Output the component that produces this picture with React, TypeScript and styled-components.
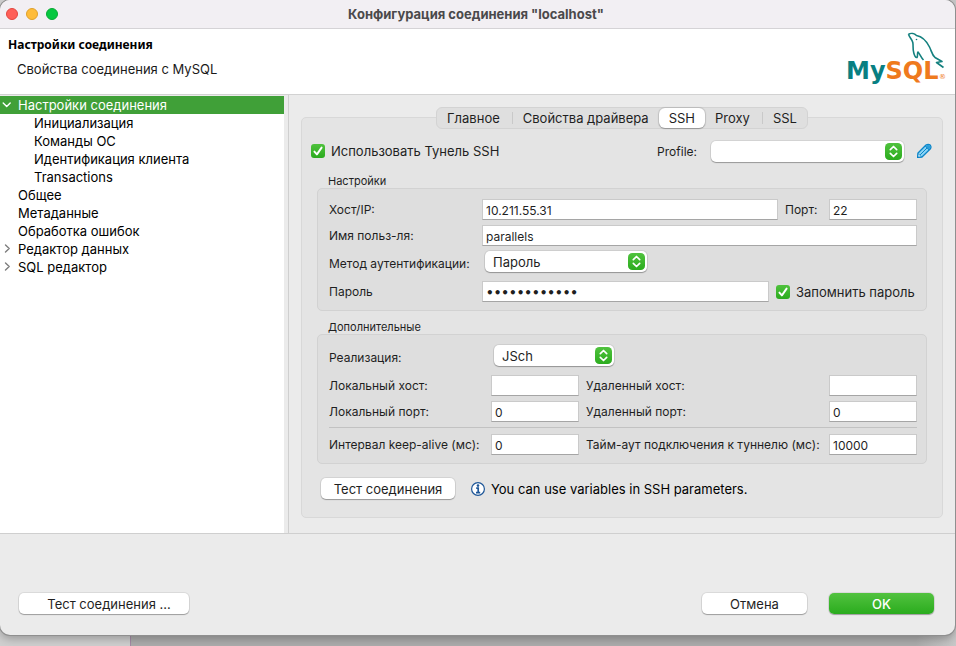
import React from "react";
import styled, { createGlobalStyle, css } from "styled-components";

const GlobalStyle = createGlobalStyle`
  *, *::before, *::after { box-sizing: border-box; }
  body {
    margin: 0;
    font-family: Inter, "Liberation Sans", sans-serif;
    font-size: 13px;
    line-height: 16px;
    color: #1f1f1f;
  }
  button, input, select { font: inherit; color: inherit; }
`;

const Desktop = styled.div`
  min-height: 100vh;
  display: flex;
  padding: 0 1px 11px 0;
  background: linear-gradient(to right, #cfcfcf 0 130px, #a58ba6 130px 131px, #acacac 131px calc(100% - 40px), #c8c8c8);
`;

const Window = styled.main`
  flex: 1;
  min-width: 0;
  display: flex;
  flex-direction: column;
  background: #ebebeb;
  border-radius: 10px;
  overflow: hidden;
  box-shadow: 0 0 0 1px #8f8f8f, 0 4px 8px rgba(0, 0, 0, 0.25);
`;

const TitleBar = styled.header`
  height: 29px;
  display: grid;
  grid-template-columns: 80px 1fr 80px;
  align-items: center;
  padding: 0 9px 0 6px;
  background: #f2eff3;
  border-bottom: 1px solid #d5d3d6;
`;

const Lights = styled.div`
  display: flex;
  gap: 8px;
`;

const Light = styled.button<{ $fill: string; $edge: string }>`
  width: 12px;
  height: 12px;
  padding: 0;
  border-radius: 50%;
  border: 1px solid ${(p) => p.$edge};
  background: ${(p) => p.$fill};
`;

const WindowTitle = styled.h1`
  margin: 0;
  font-size: 13px;
  font-weight: 700;
  line-height: 16px;
  text-align: center;
  color: #4a494b;
`;

const Banner = styled.section`
  height: 66px;
  display: flex;
  justify-content: space-between;
  padding: 3px 9px 0 8px;
  background: #fff;
  border-bottom: 1px solid #d2d2d2;
`;

const BannerTitle = styled.h2`
  margin: 5px 0 8px;
  font-family: "Noto Sans", sans-serif;
  font-size: 12px;
  line-height: 16px;
  font-weight: 700;
  color: #000;
`;

const BannerText = styled.p`
  margin: 0;
  padding-left: 9px;
  color: #1a1a1a;
`;

const Body = styled.div`
  flex: 1;
  display: flex;
  border-bottom: 1px solid #cfcfcf;
`;

const Tree = styled.ul`
  width: 284px;
  flex: none;
  margin: 1px 0 0;
  padding: 0;
  list-style: none;
  background: #fff;
  color: #000;
`;

const TreeItem = styled.li<{ $level: number; $selected?: boolean }>`
  height: 18px;
  display: flex;
  align-items: center;
  padding-left: ${(p) => (p.$level === 2 ? 34 : 2)}px;
  ${(p) =>
    p.$selected &&
    css`
      background: #40a038;
      color: #fff;
    `}
`;

const Arrow = styled.span`
  width: 16px;
  flex: none;
  display: flex;
`;

const Content = styled.section`
  flex: 1;
  min-width: 0;
  margin-left: 4px;
  padding: 12px 12px 15px;
  border-left: 1px solid #cfcfcf;
  display: flex;
  flex-direction: column;
`;

const TabBar = styled.div`
  align-self: center;
  z-index: 1;
  height: 22px;
  margin-bottom: -12px;
  display: flex;
  background: #dfdfdf;
  border: 1px solid #d3d3d3;
  border-radius: 6px;
`;

const Tab = styled.button<{ $active?: boolean; $divided?: boolean }>`
  height: 20px;
  padding: 0 10px;
  border: 0;
  border-radius: 6px;
  background: none;
  display: flex;
  align-items: center;
  ${(p) =>
    p.$active &&
    css`
      background: #fff;
      box-shadow: 0 0 1px 1px rgba(0, 0, 0, 0.12), 0 1px 1px rgba(0, 0, 0, 0.2);
    `}
  ${(p) =>
    p.$divided &&
    css`
      &::after {
        content: "";
        width: 1px;
        height: 12px;
        margin: 0 -10px 0 12px;
        background: #c9c9c9;
      }
    `}
`;

const Panel = styled.div`
  flex: 1;
  display: flex;
  flex-direction: column;
  padding: 22px 0 18px;
  background: #e4e4e4;
  border: 1px solid #d8d8d8;
  border-radius: 5px;
`;

const ToggleRow = styled.div`
  height: 22px;
  display: flex;
  align-items: center;
  justify-content: space-between;
  padding: 0 10px 0 9px;
  margin-bottom: 12px;
`;

const Profile = styled.div`
  display: flex;
  align-items: center;
  gap: 14px;
`;

const CheckLabel = styled.label<{ $width?: number }>`
  display: flex;
  align-items: center;
  gap: 6px;
  white-space: nowrap;
  ${(p) => p.$width && `width: ${p.$width}px;`}
`;

const CheckHolder = styled.span`
  position: relative;
  width: 14px;
  height: 14px;
  flex: none;
  svg {
    position: absolute;
    inset: 0;
    pointer-events: none;
  }
`;

const CheckInput = styled.input`
  appearance: none;
  display: block;
  width: 14px;
  height: 14px;
  margin: 0;
  border-radius: 3px;
  background: #fff;
  &:checked { background: linear-gradient(#4fc23d, #2bab1e); }
`;

const SelectHolder = styled.span<{ $width: number; $inset?: boolean }>`
  position: relative;
  display: inline-flex;
  width: ${(p) => p.$width}px;
  height: 21px;
  margin-left: ${(p) => (p.$inset ? 3 : 0)}px;
  svg {
    position: absolute;
    right: 2px;
    top: 2px;
    pointer-events: none;
  }
`;

const SelectInput = styled.select`
  appearance: none;
  width: 100%;
  height: 21px;
  padding: 0 22px 0 8px;
  border: 0;
  border-radius: 5px;
  background: #fff;
  box-shadow: 0 0 0 1px rgba(0, 0, 0, 0.07), 0 1px 1px rgba(0, 0, 0, 0.28);
`;

const IconButton = styled.button`
  width: 16px;
  height: 16px;
  padding: 0;
  margin-left: -2px;
  border: 0;
  background: none;
  display: flex;
`;

const Group = styled.fieldset`
  min-width: 0;
  margin: 0 15px 9px;
  padding: 0;
  border: 0;
`;

const Legend = styled.legend`
  padding: 0 0 0 11px;
  font-size: 11px;
  line-height: 14px;
`;

const GroupBox = styled.div`
  padding: 10px 9px 8px 11px;
  background: #dedede;
  border: 1px solid #d2d2d2;
  border-radius: 5px;
  display: flex;
  flex-direction: column;
  gap: 5px;
`;

const FormRow = styled.div<{ $tall?: boolean }>`
  height: ${(p) => (p.$tall ? 25 : 21)}px;
  display: flex;
  align-items: ${(p) => (p.$tall ? "flex-start" : "center")};
`;

const FieldLabel = styled.label<{ $width?: number; $grow?: boolean; $tall?: boolean }>`
  font-size: 12px;
  line-height: ${(p) => (p.$tall ? 25 : 21)}px;
  white-space: nowrap;
  ${(p) => p.$width && `width: ${p.$width}px; flex: none;`}
  ${(p) => p.$grow && "flex: 1; padding-left: 7px;"}
`;

const TextField = styled.input<{ $short?: boolean }>`
  height: 21px;
  min-width: 0;
  padding: 2px 3px 0;
  font-size: 12px;
  background: #fff;
  border: 1px solid #cacaca;
  border-bottom-color: #a5a5a5;
  border-radius: 0;
  ${(p) => (p.$short ? "width: 88px; flex: none;" : "flex: 1;")}
  &[type="password"] {
    font-family: "DejaVu Sans", sans-serif;
    font-weight: 700;
  }
`;

const Space = styled.span`
  width: 7px;
  flex: none;
`;

const Rule = styled.hr`
  width: 100%;
  height: 1px;
  margin: 0 0 1px;
  border: 0;
  background: #c2c2c2;
`;

const HintRow = styled.div`
  display: flex;
  align-items: center;
  gap: 15px;
  margin-top: 5px;
  padding-left: 19px;
`;

const Hint = styled.p`
  margin: 0;
  display: flex;
  align-items: center;
  gap: 5px;
  color: #000;
`;

const PushButton = styled.button<{ $width: number; $primary?: boolean; $indent?: number }>`
  width: ${(p) => p.$width}px;
  height: 21px;
  padding: 0 0 0 ${(p) => p.$indent ?? 0}px;
  border: 0;
  border-radius: 5px;
  line-height: 20px;
  background: #fff;
  box-shadow: 0 0 0 1px rgba(0, 0, 0, 0.07), 0 1px 1px rgba(0, 0, 0, 0.28);
  ${(p) =>
    p.$primary &&
    css`
      background: linear-gradient(#52c23f, #2aac1e);
      color: #fff;
      font-weight: 500;
    `}
`;

const Footer = styled.footer`
  height: 101px;
  display: flex;
  align-items: flex-end;
  gap: 22px;
  padding: 0 21px 21px 19px;
`;

const Spacer = styled.span`
  flex: 1;
`;

function Checkbox({ label, width }: { label: string; width?: number }) {
  return (
    <CheckLabel $width={width}>
      <CheckHolder>
        <CheckInput type="checkbox" defaultChecked />
        <svg width="14" height="14" viewBox="0 0 14 14" fill="none" stroke="#fff" strokeWidth="1.9" strokeLinecap="round" strokeLinejoin="round">
          <path d="M3.4 7.6 5.9 10.4 10.6 3.6" />
        </svg>
      </CheckHolder>
      {label}
    </CheckLabel>
  );
}

function Select({ id, value, width, inset }: { id: string; value: string; width: number; inset?: boolean }) {
  return (
    <SelectHolder $width={width} $inset={inset}>
      <SelectInput id={id} defaultValue={value}>
        <option value={value}>{value}</option>
      </SelectInput>
      <svg width="17" height="17" viewBox="0 0 16 16" fill="none">
        <defs>
          <linearGradient id={`${id}-fill`} x1="0" y1="0" x2="0" y2="1">
            <stop offset="0" stopColor="#50c23e" />
            <stop offset="1" stopColor="#2bac1e" />
          </linearGradient>
        </defs>
        <rect width="16" height="16" rx="4" fill={`url(#${id}-fill)`} />
        <path d="M5 6.2 8 3.3 11 6.2M5 9.8 8 12.7 11 9.8" stroke="#fff" strokeWidth="1.6" strokeLinecap="round" strokeLinejoin="round" />
      </svg>
    </SelectHolder>
  );
}

function Logo() {
  return (
    <svg width="100" height="54" viewBox="0 0 100 54" role="img" aria-label="MySQL">
      <path
        d="M62.500 2.200C65 .8 68.500 1.500 70.500 3.500C76 4.500 80.500 9 83.500 15C85.500 19 86 23 89 25.500L96 29.500L90.500 30.500L97.500 35.500M62.500 2.200C63 5 66 7 66.800 10.500C67.500 14 66.500 17 67.800 21C68.500 23.500 69.500 26 71 25.500C72 24 71 21.500 72 20C74 22 75 25.500 77.500 28"
        fill="none"
        stroke="#14807f"
        strokeWidth="1.600"
        strokeLinejoin="round"
      />
      <circle cx="70.500" cy="7.500" r=".8" fill="#14807f" />
      <text x="0" y="47" fontFamily="DejaVu Sans, sans-serif" fontWeight="700" fontSize="24" fill="#087f82">
        My<tspan fill="#ef7a1d">SQL</tspan>
      </text>
      <text x="93" y="47" fontFamily="DejaVu Sans, sans-serif" fontSize="7" fill="#ef7a1d">®</text>
    </svg>
  );
}

const treeItems: { text: string; level: number; arrow?: "open" | "closed" }[] = [
  { text: "Настройки соединения", level: 1, arrow: "open" },
  { text: "Инициализация", level: 2 },
  { text: "Команды ОС", level: 2 },
  { text: "Идентификация клиента", level: 2 },
  { text: "Transactions", level: 2 },
  { text: "Общее", level: 1 },
  { text: "Метаданные", level: 1 },
  { text: "Обработка ошибок", level: 1 },
  { text: "Редактор данных", level: 1, arrow: "closed" },
  { text: "SQL редактор", level: 1, arrow: "closed" },
];

const tabs = [
  { text: "Главное", divided: true },
  { text: "Свойства драйвера" },
  { text: "SSH", active: true },
  { text: "Proxy", divided: true },
  { text: "SSL" },
];

export default function App() {
  return (
    <>
      <GlobalStyle />
      <Desktop>
        <Window>
          <TitleBar>
            <Lights>
              <Light aria-label="Закрыть" $fill="#fe5f58" $edge="#e2463f" />
              <Light aria-label="Свернуть" $fill="#febc3a" $edge="#dfa02a" />
              <Light aria-label="Развернуть" $fill="#06c840" $edge="#08a934" />
            </Lights>
            <WindowTitle>Конфигурация соединения "localhost"</WindowTitle>
          </TitleBar>
          <Banner>
            <div>
              <BannerTitle>Настройки соединения</BannerTitle>
              <BannerText>Свойства соединения с MySQL</BannerText>
            </div>
            <Logo />
          </Banner>
          <Body>
            <Tree role="tree">
              {treeItems.map((item, i) => (
                <TreeItem
                  key={item.text}
                  role="treeitem"
                  aria-level={item.level}
                  aria-selected={i === 0}
                  aria-expanded={item.arrow ? item.arrow === "open" : undefined}
                  $level={item.level}
                  $selected={i === 0}
                >
                  {item.level === 1 && (
                    <Arrow>
                      {item.arrow && (
                        <svg width="10" height="10" viewBox="0 0 10 10" fill="none" strokeWidth="1.4" strokeLinecap="round" strokeLinejoin="round" stroke={i === 0 ? "#fff" : "#7d7d7d"}>
                          <path d={item.arrow === "open" ? "M1.200 3 4.700 6.500 8.200 3" : "M3.500 1 7.200 4.500 3.500 8"} />
                        </svg>
                      )}
                    </Arrow>
                  )}
                  {item.text}
                </TreeItem>
              ))}
            </Tree>
            <Content>
              <TabBar role="tablist">
                {tabs.map((tab) => (
                  <Tab key={tab.text} role="tab" aria-selected={!!tab.active} $active={tab.active} $divided={tab.divided}>
                    {tab.text}
                  </Tab>
                ))}
              </TabBar>
              <Panel role="tabpanel">
                <ToggleRow>
                  <Checkbox label="Использовать Тунель SSH" />
                  <Profile>
                    <FieldLabel htmlFor="profile">Profile:</FieldLabel>
                    <Select id="profile" value="" width={193} />
                    <IconButton aria-label="Изменить профиль">
                      <svg width="16" height="16" viewBox="0 0 16 16">
                        <path d="M2 10 10 2Q12.300 .6 14.200 2.100Q15.700 4 14.200 6L6 14 1.600 14.400Z" fill="#8ad4f5" stroke="#0a84c8" strokeWidth="1.300" strokeLinejoin="round" />
                        <path d="M10 2.400Q12.300 1 13.900 2.400Q15.200 4 13.800 5.800L12.800 6.600 9.400 3.100Z" fill="#2d9fda" />
                        <path d="M2.200 10.600 5.400 13.800 1.900 14.100Z" fill="#fff" stroke="#0a84c8" strokeWidth=".8" />
                        <path d="M9.200 3 13 6.800M4.100 11.900 11.100 4.900" stroke="#0a84c8" strokeWidth="1" fill="none" />
                      </svg>
                    </IconButton>
                  </Profile>
                </ToggleRow>

                <Group>
                  <Legend>Настройки</Legend>
                  <GroupBox>
                    <FormRow>
                      <FieldLabel htmlFor="host" $width={153}>Хост/IP:</FieldLabel>
                      <TextField id="host" defaultValue="10.211.55.31" />
                      <Space />
                      <FieldLabel htmlFor="port" $width={44}>Порт:</FieldLabel>
                      <TextField id="port" defaultValue="22" $short />
                    </FormRow>
                    <FormRow>
                      <FieldLabel htmlFor="user" $width={153}>Имя польз-ля:</FieldLabel>
                      <TextField id="user" defaultValue="parallels" />
                    </FormRow>
                    <FormRow $tall>
                      <FieldLabel htmlFor="auth" $width={153} $tall>Метод аутентификации:</FieldLabel>
                      <Select id="auth" value="Пароль" width={162} inset />
                    </FormRow>
                    <FormRow>
                      <FieldLabel htmlFor="password" $width={153}>Пароль</FieldLabel>
                      <TextField id="password" type="password" defaultValue="000000000000" />
                      <Space />
                      <Checkbox label="Запомнить пароль" width={141} />
                    </FormRow>
                  </GroupBox>
                </Group>

                <Group>
                  <Legend>Дополнительные</Legend>
                  <GroupBox>
                    <FormRow $tall>
                      <FieldLabel htmlFor="impl" $width={162} $tall>Реализация:</FieldLabel>
                      <Select id="impl" value="JSch" width={120} inset />
                    </FormRow>
                    <FormRow>
                      <FieldLabel htmlFor="lhost" $width={162}>Локальный хост:</FieldLabel>
                      <TextField id="lhost" $short />
                      <FieldLabel htmlFor="rhost" $grow>Удаленный хост:</FieldLabel>
                      <TextField id="rhost" $short />
                    </FormRow>
                    <FormRow>
                      <FieldLabel htmlFor="lport" $width={162}>Локальный порт:</FieldLabel>
                      <TextField id="lport" defaultValue="0" $short />
                      <FieldLabel htmlFor="rport" $grow>Удаленный порт:</FieldLabel>
                      <TextField id="rport" defaultValue="0" $short />
                    </FormRow>
                    <Rule />
                    <FormRow>
                      <FieldLabel htmlFor="keep" $width={162}>Интервал keep-alive (мс):</FieldLabel>
                      <TextField id="keep" defaultValue="0" $short />
                      <FieldLabel htmlFor="timeout" $grow>Тайм-аут подключения к туннелю (мс):</FieldLabel>
                      <TextField id="timeout" defaultValue="10000" $short />
                    </FormRow>
                  </GroupBox>
                </Group>

                <HintRow>
                  <PushButton $width={134}>Тест соединения</PushButton>
                  <Hint>
                    <svg width="16" height="16" viewBox="0 0 16 16" fill="none">
                      <circle cx="8" cy="8" r="6.400" fill="#fff" stroke="#1d5698" strokeWidth="1.200" />
                      <circle cx="8" cy="4.600" r="1.300" fill="#1d5698" />
                      <path d="M6.200 7.200H8.200V11.500M6 11.600H10.200" stroke="#1d5698" strokeWidth="1.700" />
                    </svg>
                    You can use variables in SSH parameters.
                  </Hint>
                </HintRow>
              </Panel>
            </Content>
          </Body>
          <Footer>
            <PushButton $width={170} $indent={10}>Тест соединения ...</PushButton>
            <Spacer />
            <PushButton $width={105}>Отмена</PushButton>
            <PushButton $width={105} $primary>OK</PushButton>
          </Footer>
        </Window>
      </Desktop>
    </>
  );
}
